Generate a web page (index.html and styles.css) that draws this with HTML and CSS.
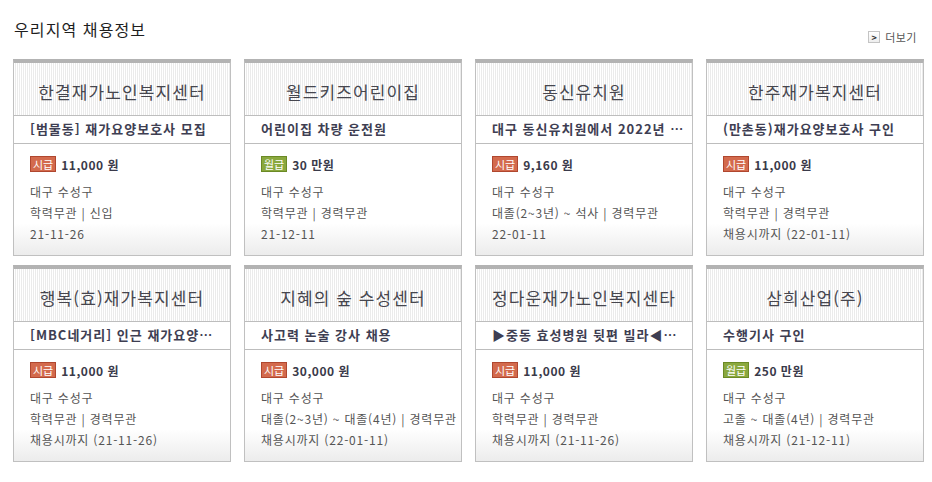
FILE: index.html
```html
<!DOCTYPE html>
<html lang="ko">
<head>
<meta charset="utf-8">
<link rel="stylesheet" href="styles.css">
</head>
<body>
<div class="wrap">
  <div class="head">
    <h2 class="title">우리지역 채용정보</h2>
    <a class="more"><span class="more-box">&gt;</span>더보기</a>
  </div>
  <div class="grid">
    <div class="card">
      <div class="c-head">한결재가노인복지센터</div>
      <div class="c-sub">[범물동] 재가요양보호사 모집</div>
      <div class="c-body">
        <div class="pay"><span class="badge red">시급</span>11,000 원</div>
        <div class="line">대구 수성구</div>
        <div class="line">학력무관 | 신입</div>
        <div class="line">21-11-26</div>
      </div>
    </div>
    <div class="card">
      <div class="c-head">월드키즈어린이집</div>
      <div class="c-sub">어린이집 차량 운전원</div>
      <div class="c-body">
        <div class="pay"><span class="badge green">월급</span>30 만원</div>
        <div class="line">대구 수성구</div>
        <div class="line">학력무관 | 경력무관</div>
        <div class="line">21-12-11</div>
      </div>
    </div>
    <div class="card">
      <div class="c-head">동신유치원</div>
      <div class="c-sub">대구 동신유치원에서 2022년 …</div>
      <div class="c-body">
        <div class="pay"><span class="badge red">시급</span>9,160 원</div>
        <div class="line">대구 수성구</div>
        <div class="line">대졸(2~3년) ~ 석사 | 경력무관</div>
        <div class="line">22-01-11</div>
      </div>
    </div>
    <div class="card">
      <div class="c-head">한주재가복지센터</div>
      <div class="c-sub">(만촌동)재가요양보호사 구인</div>
      <div class="c-body">
        <div class="pay"><span class="badge red">시급</span>11,000 원</div>
        <div class="line">대구 수성구</div>
        <div class="line">학력무관 | 경력무관</div>
        <div class="line">채용시까지 (22-01-11)</div>
      </div>
    </div>
    <div class="card">
      <div class="c-head">행복(효)재가복지센터</div>
      <div class="c-sub">[MBC네거리] 인근 재가요양…</div>
      <div class="c-body">
        <div class="pay"><span class="badge red">시급</span>11,000 원</div>
        <div class="line">대구 수성구</div>
        <div class="line">학력무관 | 경력무관</div>
        <div class="line">채용시까지 (21-11-26)</div>
      </div>
    </div>
    <div class="card">
      <div class="c-head">지혜의 숲 수성센터</div>
      <div class="c-sub">사고력 논술 강사 채용</div>
      <div class="c-body">
        <div class="pay"><span class="badge red">시급</span>30,000 원</div>
        <div class="line">대구 수성구</div>
        <div class="line">대졸(2~3년) ~ 대졸(4년) | 경력무관</div>
        <div class="line">채용시까지 (22-01-11)</div>
      </div>
    </div>
    <div class="card">
      <div class="c-head">정다운재가노인복지센타</div>
      <div class="c-sub">▶중동 효성병원 뒷편 빌라◀…</div>
      <div class="c-body">
        <div class="pay"><span class="badge red">시급</span>11,000 원</div>
        <div class="line">대구 수성구</div>
        <div class="line">학력무관 | 경력무관</div>
        <div class="line">채용시까지 (21-11-26)</div>
      </div>
    </div>
    <div class="card">
      <div class="c-head">삼희산업(주)</div>
      <div class="c-sub">수행기사 구인</div>
      <div class="c-body">
        <div class="pay"><span class="badge green">월급</span>250 만원</div>
        <div class="line">대구 수성구</div>
        <div class="line">고졸 ~ 대졸(4년) | 경력무관</div>
        <div class="line">채용시까지 (21-12-11)</div>
      </div>
    </div>
  </div>
</div>
</body>
</html>
```

FILE: styles.css
```css
* { box-sizing: border-box; }
html, body { margin: 0; padding: 0; background: #fff; }
body {
  font-family: "Noto Sans CJK KR", "Noto Sans", "DejaVu Sans", sans-serif;
  color: #555;
}
.wrap {
  width: 932px;
  padding: 18px 8px 0 13px;
}
.head {
  display: flex;
  justify-content: space-between;
  align-items: flex-end;
  height: 41px;
}
.title {
  margin: 0 0 0 1px;
  font-size: 16px;
  font-weight: normal;
  letter-spacing: 1.1px;
  color: #1e1e1e;
  line-height: 22px;
  align-self: flex-start;
}
.more {
  display: flex;
  align-items: center;
  font-size: 11px;
  letter-spacing: 0.5px;
  color: #555;
  line-height: 14px;
  margin: 0 7px 15px 0;
}
.more-box {
  display: inline-flex;
  align-items: center;
  justify-content: center;
  width: 12px;
  height: 12px;
  border: 1px solid #c4c4c4;
  background: linear-gradient(#fff, #eee);
  font-size: 9px;
  font-weight: bold;
  color: #333;
  margin-right: 5px;
  line-height: 1;
  letter-spacing: 0;
}
.grid {
  display: grid;
  grid-template-columns: repeat(4, 218px);
  column-gap: 13px;
  row-gap: 9px;
}
.card {
  border: 1px solid #c0c0c0;
  border-top: 4px solid #b3b3b3;
  height: 197px;
  display: flex;
  flex-direction: column;
  background: linear-gradient(to bottom, #fff 0, #fff 160px, #ececec 100%);
}
.c-head {
  height: 53px;
  border-bottom: 1px solid #bdbdbd;
  background: repeating-linear-gradient(90deg, #fff 0 1px, #ebebeb 1px 2px);
  display: flex;
  align-items: center;
  justify-content: center;
  padding-top: 4px;
  font-size: 17px;
  letter-spacing: 1.1px;
  color: #46464e;
  white-space: nowrap;
}
.c-sub {
  height: 28px;
  border-bottom: 1px solid #bdbdbd;
  background: #fff;
  padding: 0 8px 0 16px;
  font-size: 13px;
  letter-spacing: 1px;
  font-weight: bold;
  color: #3e3e52;
  line-height: 26px;
  white-space: nowrap;
  overflow: hidden;
}
.c-body {
  padding: 12px 0 0 16px;
  white-space: nowrap;
}
.pay {
  display: flex;
  align-items: center;
  height: 16px;
  font-size: 12px;
  font-weight: bold;
  letter-spacing: 0.5px;
  color: #3a3a4a;
  margin-bottom: 9px;
}
.badge {
  display: inline-block;
  height: 16px;
  padding: 0 2px;
  font-size: 11px;
  line-height: 14px;
  letter-spacing: 0;
  color: #fff;
  font-weight: normal;
  margin-right: 5px;
  border: 1px solid;
}
.badge.red { background: #d36a4d; border-color: #b0472f; }
.badge.green { background: #8aa83e; border-color: #6b8a25; }
.line {
  font-size: 12px;
  line-height: 21px;
  letter-spacing: 0.8px;
  color: #555;
}
```
